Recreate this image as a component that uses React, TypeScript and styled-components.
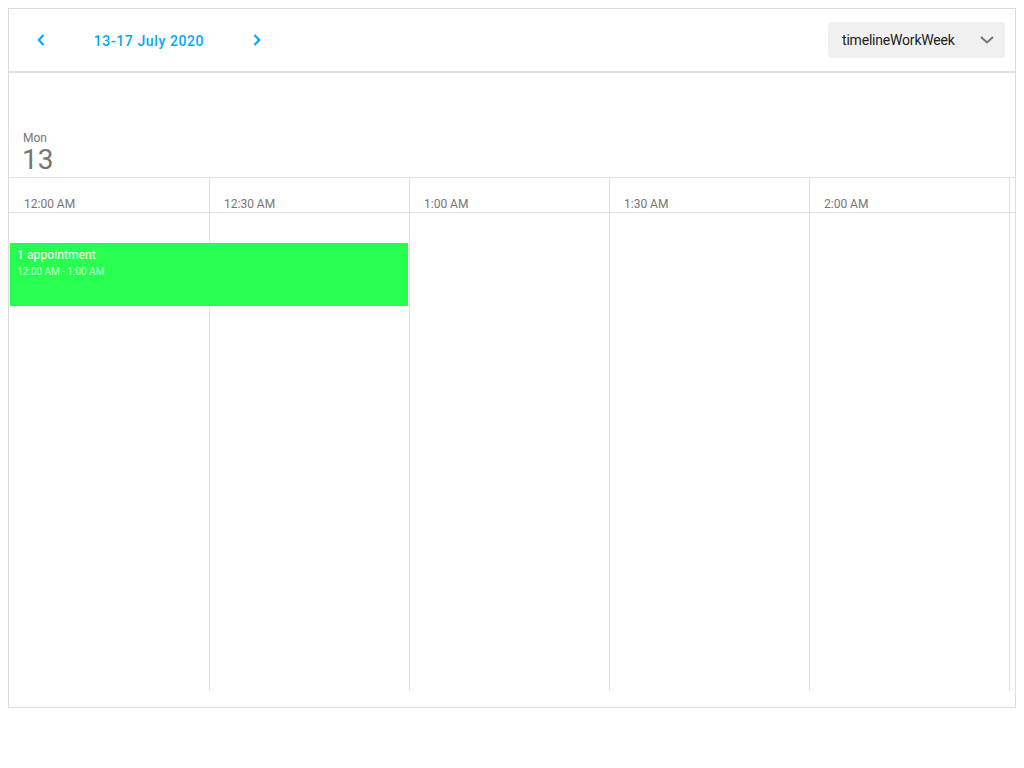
import React from "react";
import styled, { createGlobalStyle } from "styled-components";

const Global = createGlobalStyle`
  *, *::before, *::after { box-sizing: border-box; }
  body {
    margin: 8px;
    font-family: Roboto, "Liberation Sans", sans-serif;
    background: #fff;
  }
`;

const Frame = styled.div`
  width: 1008px;
  height: 700px;
  border: 1px solid #dddddd;
  display: flex;
  flex-direction: column;
  overflow: hidden;
`;

const Toolbar = styled.div`
  height: 64px;
  flex: none;
  border-bottom: 2px solid #e0e0e0;
  display: flex;
  align-items: center;
  padding: 0 10px 0 22px;
`;

const NavButton = styled.button`
  width: 20px;
  height: 30px;
  border: none;
  background: transparent;
  padding: 0;
  display: flex;
  align-items: center;
  justify-content: center;
  cursor: pointer;
  color: #03a9f4;
`;

const Title = styled.div`
  color: #03a9f4;
  font-size: 14px;
  font-weight: 500;
  letter-spacing: 0.6px;
  width: 196px;
  text-align: center;
  padding-top: 2px;
`;

const Spacer = styled.div`
  flex: 1;
`;

const ViewSelect = styled.div`
  width: 177px;
  height: 36px;
  background: #f0f0f0;
  border-radius: 4px;
  display: flex;
  align-items: center;
  justify-content: space-between;
  padding: 0 11px 0 14px;
  font-size: 14px;
  letter-spacing: -0.2px;
  color: #212121;
`;

const DayHeader = styled.div`
  height: 105px;
  flex: none;
  border-bottom: 1px solid #e0e0e0;
  display: flex;
  flex-direction: column;
  justify-content: flex-end;
  padding: 0 0 1px 14px;
  color: #757575;
`;

const DayName = styled.div`
  font-size: 12px;
  line-height: 14px;
  margin-bottom: -1px;
`;

const DayNumber = styled.div`
  font-size: 28px;
  line-height: 32px;
  margin-left: -1px;
`;

const Scroller = styled.div`
  flex: 1;
  overflow: hidden;
  padding-bottom: 16px;
  display: flex;
  flex-direction: column;
`;

const TimeRow = styled.div`
  display: flex;
  height: 35px;
  flex: none;
  padding-left: 1px;
  border-bottom: 1px solid #e0e0e0;
`;

const TimeCell = styled.div`
  width: 200px;
  flex: none;
  border-right: 1px solid #e0e0e0;
  padding: 0 0 0 14px;
  display: flex;
  align-items: flex-end;
  font-size: 12px;
  line-height: 16px;
  color: #757575;
`;

const Grid = styled.div`
  position: relative;
  flex: 1;
  display: flex;
  padding-left: 1px;
`;

const Column = styled.div`
  width: 200px;
  flex: none;
  border-right: 1px solid #e0e0e0;
`;

const Appointment = styled.div`
  position: absolute;
  left: 1px;
  top: 30px;
  width: 398px;
  height: 63px;
  background: #26ff50;
  color: #fff;
  padding: 5px 7px;
  overflow: hidden;
`;

const ApptTitle = styled.div`
  font-size: 12px;
  line-height: 15px;
  letter-spacing: 0.1px;
`;

const ApptTime = styled.div`
  font-size: 10px;
  line-height: 12px;
  margin-top: 3px;
  opacity: 0.7;
`;

const times = ["12:00 AM", "12:30 AM", "1:00 AM", "1:30 AM", "2:00 AM", ""];

const Chevron = ({ dir }: { dir: "left" | "right" }) => (
  <svg width="8" height="12" viewBox="0 0 8 12" fill="none">
    <polyline
      points={dir === "left" ? "6.5,1 1.8,6 6.5,11" : "1.5,1 6.2,6 1.5,11"}
      stroke="currentColor"
      strokeWidth="2.2"
      fill="none"
    />
  </svg>
);

const DropChevron = () => (
  <svg width="14" height="8" viewBox="0 0 14 8">
    <polyline points="1,1 7,6.5 13,1" stroke="#757575" strokeWidth="2" fill="none" />
  </svg>
);

export default function App() {
  return (
    <>
      <Global />
      <Frame>
        <Toolbar>
          <NavButton aria-label="previous">
            <Chevron dir="left" />
          </NavButton>
          <Title>13-17 July 2020</Title>
          <NavButton aria-label="next">
            <Chevron dir="right" />
          </NavButton>
          <Spacer />
          <ViewSelect>
            <span>timelineWorkWeek</span>
            <DropChevron />
          </ViewSelect>
        </Toolbar>
        <DayHeader>
          <DayName>Mon</DayName>
          <DayNumber>13</DayNumber>
        </DayHeader>
        <Scroller>
          <TimeRow>
            {times.map((t, i) => (
              <TimeCell key={i}>{t}</TimeCell>
            ))}
          </TimeRow>
          <Grid>
            {times.map((_, i) => (
              <Column key={i} />
            ))}
            <Appointment>
              <ApptTitle>1 appointment</ApptTitle>
              <ApptTime>12:00 AM - 1:00 AM</ApptTime>
            </Appointment>
          </Grid>
        </Scroller>
      </Frame>
    </>
  );
}
